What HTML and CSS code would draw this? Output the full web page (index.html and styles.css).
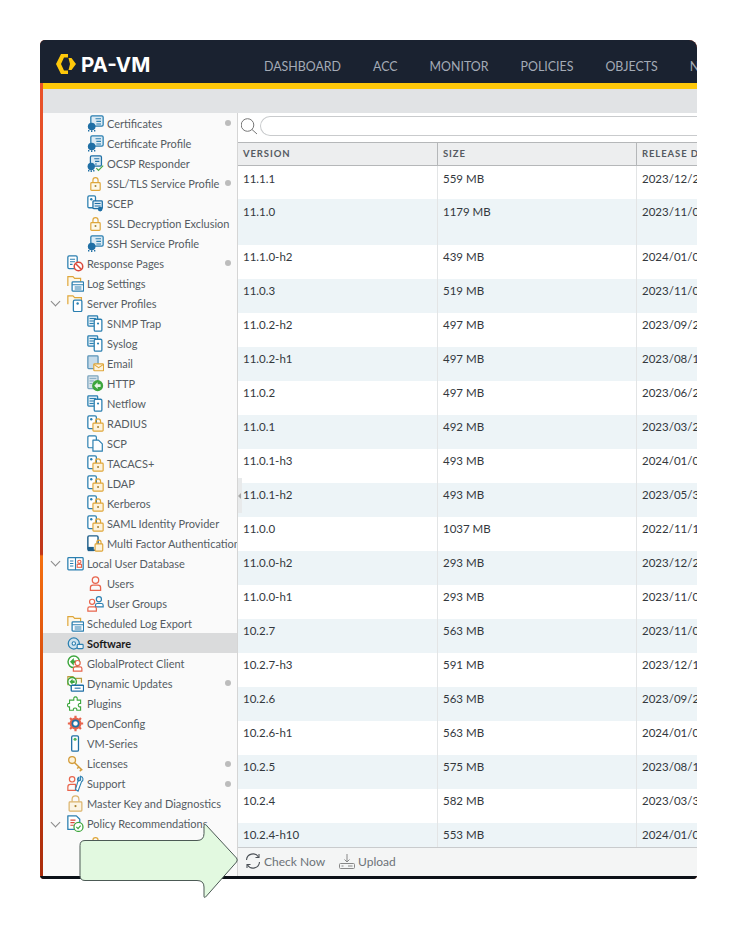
FILE: index.html
```html
<!DOCTYPE html>
<html lang="en">
<head>
    <meta charset="UTF-8">
    <title>PA-VM Software</title>
    <link rel="stylesheet" href="styles.css">
</head>
<body>
    <svg class="sprites" width="0" height="0">
        <symbol id="i-cert" viewBox="0 0 20 20">
            <rect x="4.500" y="1" width="14.500" height="12" rx="1.500" fill="#dcebf4" stroke="#2b7fb0" stroke-width="1.500"/>
            <path d="M10 4.500h6.500M11 7.500h5.500M11 10.500h5.500" stroke="#2b7fb0" stroke-width="1.200"/>
            <circle cx="5.500" cy="13.500" r="4.500" fill="#1f6fa5"/>
            <path d="M2 17.500v2M5.500 18v2M9 17.500v2" stroke="#1f6fa5" stroke-width="1.600"/>
        </symbol>
        <symbol id="i-ocsp" viewBox="0 0 20 20">
            <rect x="4" y="1" width="13" height="12" rx="1.500" fill="#dcebf4" stroke="#1f6fa5" stroke-width="1.500"/>
            <path d="M8.500 4.500h6M9.500 7.500h5M9.500 10.500h2" stroke="#1f6fa5" stroke-width="1.200"/>
            <circle cx="5" cy="13.500" r="4.300" fill="#1f6fa5"/>
            <path d="M2 17.500v2M5 18v2M8 17.500v2" stroke="#1f6fa5" stroke-width="1.600"/>
            <path d="M11 15.500l2.500 2.500L19 12.500" fill="none" stroke="#4aa84a" stroke-width="1.400"/>
        </symbol>
        <symbol id="i-lock" viewBox="0 0 20 20">
            <path d="M7 9V6a3 3 0 0 1 6 0v3" fill="none" stroke="#dfa63a" stroke-width="1.400"/>
            <rect x="4.500" y="9" width="11" height="9" rx="1" fill="#fdf8ea" stroke="#dfa63a" stroke-width="1.400"/>
            <circle cx="10" cy="13" r="1.200" fill="#a9822f"/>
        </symbol>
        <symbol id="i-scep" viewBox="0 0 20 20">
            <rect x="1" y="1" width="9" height="14" rx="1.500" fill="#fff" stroke="#2b7fb0" stroke-width="1.500"/>
            <circle cx="5" cy="5" r="1.400" fill="#2b7fb0"/>
            <rect x="7" y="7" width="11" height="9" rx="1" fill="#dcebf4" stroke="#1f6fa5" stroke-width="1.500"/>
            <path d="M9 10h7M9 13h7" stroke="#1f6fa5" stroke-width="1.200"/>
            <circle cx="15.500" cy="16.500" r="2.800" fill="#1f6fa5"/>
        </symbol>
        <symbol id="i-resp" viewBox="0 0 20 20">
            <rect x="1" y="1" width="11" height="15" rx="1.500" fill="#fff" stroke="#2b7fb0" stroke-width="1.500"/>
            <path d="M3.500 5h6M3.500 8h6M3.500 11h3" stroke="#2b7fb0" stroke-width="1.300"/>
            <circle cx="13.500" cy="13.500" r="5" fill="#fff" stroke="#d9493b" stroke-width="1.800"/>
            <path d="M10 10l7 7" stroke="#d9493b" stroke-width="1.800"/>
        </symbol>
        <symbol id="i-logs" viewBox="0 0 20 20">
            <path d="M1 13V2h6l2 2h7v5" fill="#fdf8ea" stroke="#dfa63a" stroke-width="1.400"/>
            <rect x="6" y="8" width="13.500" height="11" rx="1" fill="#fff" stroke="#2b7fb0" stroke-width="1.500"/>
            <path d="M6 11.500h13.500M9 14h8M9 16.500h8" stroke="#2b7fb0" stroke-width="1.200"/>
        </symbol>
        <symbol id="i-servers" viewBox="0 0 20 20">
            <path d="M1 11V1h6l2 2h8v4" fill="#fdf8ea" stroke="#dfa63a" stroke-width="1.400"/>
            <rect x="7.500" y="6" width="10" height="13.500" rx="1.500" fill="#fff" stroke="#2b7fb0" stroke-width="1.500"/>
            <circle cx="12.500" cy="10" r="1.400" fill="#2b7fb0"/>
        </symbol>
        <symbol id="i-snmp" viewBox="0 0 20 20">
            <rect x="1" y="1" width="11.500" height="12" rx="1" fill="#dcebf4" stroke="#2b7fb0" stroke-width="1.500"/>
            <path d="M3 4h7.500M3 7h5M3 10h5" stroke="#2b7fb0" stroke-width="1.200"/>
            <rect x="8.500" y="5" width="9" height="14" rx="1.500" fill="#fff" stroke="#2b7fb0" stroke-width="1.500"/>
            <circle cx="13" cy="10" r="1.300" fill="#2b7fb0"/>
        </symbol>
        <symbol id="i-email" viewBox="0 0 20 20">
            <rect x="1" y="1" width="12" height="15" rx="1" fill="#c5dbea" stroke="#5b94b8" stroke-width="1.500"/>
            <rect x="8" y="10.500" width="11.500" height="8" rx="1" fill="#fdf3dc" stroke="#dfa63a" stroke-width="1.400"/>
            <path d="M8 11l5.700 4 5.700-4" fill="none" stroke="#dfa63a" stroke-width="1.200"/>
        </symbol>
        <symbol id="i-http" viewBox="0 0 20 20">
            <rect x="1" y="1" width="12" height="15" rx="1" fill="#d5e2ea" stroke="#7ea6bf" stroke-width="1.500"/>
            <path d="M3 4h8M3 7h5M3 10h3" stroke="#7ea6bf" stroke-width="1.100"/>
            <circle cx="12.500" cy="12.500" r="6.500" fill="#3da63d"/>
            <path d="M8.500 12.500l4-4v2.500h3.500v3h-3.500v2.500z" fill="#e7f5e7"/>
        </symbol>
        <symbol id="i-auth" viewBox="0 0 20 20">
            <rect x="1" y="1" width="10" height="15" rx="1.500" fill="#fff" stroke="#2b7fb0" stroke-width="1.500"/>
            <circle cx="5" cy="5" r="1.400" fill="#2b7fb0"/>
            <path d="M10 9.500V7.500a3 3 0 0 1 6 0v2" fill="none" stroke="#dfa63a" stroke-width="1.400"/>
            <rect x="7" y="9.500" width="12" height="9.500" rx="1" fill="#fdf3dc" stroke="#dfa63a" stroke-width="1.400"/>
            <circle cx="13" cy="14" r="1.200" fill="#a9822f"/>
        </symbol>
        <symbol id="i-scp" viewBox="0 0 20 20">
            <rect x="1" y="1" width="10" height="14" rx="1.500" fill="#fff" stroke="#2b7fb0" stroke-width="1.400"/>
            <path d="M7 6h6.500l4.500 4.500V19H7z" fill="#fff" stroke="#2b7fb0" stroke-width="1.400" stroke-linejoin="round"/>
        </symbol>
        <symbol id="i-mfa" viewBox="0 0 20 20">
            <rect x="1" y="1" width="12" height="17" rx="1.500" fill="#fff" stroke="#1f5f8a" stroke-width="1.700"/>
            <rect x="1" y="14" width="7" height="5" fill="#1f5f8a"/>
            <path d="M11.500 10.500V8.500a2.500 2.500 0 0 1 5 0v2" fill="none" stroke="#dfa63a" stroke-width="1.400"/>
            <rect x="9.500" y="10.500" width="9" height="8.500" rx="1" fill="#fdf3dc" stroke="#dfa63a" stroke-width="1.400"/>
        </symbol>
        <symbol id="i-userdb" viewBox="0 0 20 20">
            <rect x="1" y="3" width="18" height="14.500" rx="1" fill="#fff" stroke="#2b7fb0" stroke-width="1.500"/>
            <path d="M10 3v14.500M3.500 7h4M3.500 10h4M3.500 13h4" stroke="#2b7fb0" stroke-width="1.300"/>
            <circle cx="14.500" cy="8" r="1.900" fill="none" stroke="#e8644c" stroke-width="1.300"/>
            <rect x="12" y="11" width="5" height="3.500" fill="none" stroke="#e8644c" stroke-width="1.300"/>
        </symbol>
        <symbol id="i-user" viewBox="0 0 20 20">
            <circle cx="10" cy="6" r="3.800" fill="none" stroke="#e8644c" stroke-width="1.500"/>
            <path d="M4 18v-3a3 3 0 0 1 3-3h6a3 3 0 0 1 3 3v3z" fill="none" stroke="#e8644c" stroke-width="1.500"/>
        </symbol>
        <symbol id="i-group" viewBox="0 0 20 20">
            <circle cx="14" cy="5" r="3" fill="none" stroke="#2b7fb0" stroke-width="1.400"/>
            <path d="M10 14v-2a2 2 0 0 1 2-2h5a2 2 0 0 1 2 2v2z" fill="#fff" stroke="#2b7fb0" stroke-width="1.400"/>
            <circle cx="6" cy="8" r="3" fill="#fff" stroke="#e8644c" stroke-width="1.400"/>
            <path d="M1 19v-3a2 2 0 0 1 2-2h6a2 2 0 0 1 2 2v3z" fill="#fff" stroke="#e8644c" stroke-width="1.400"/>
        </symbol>
        <symbol id="i-disc" viewBox="0 0 20 20">
            <circle cx="8" cy="10" r="6.500" fill="#cfe3ef" stroke="#2b7fb0" stroke-width="1.500"/>
            <circle cx="8" cy="10" r="2" fill="#fff" stroke="#2b7fb0" stroke-width="1.300"/>
            <rect x="12" y="11" width="7" height="5" rx="1" fill="#eef5f9" stroke="#2b7fb0" stroke-width="1.300"/>
        </symbol>
        <symbol id="i-gp" viewBox="0 0 20 20">
            <circle cx="8" cy="8" r="6.800" fill="#fff" stroke="#3da63d" stroke-width="1.700"/>
            <path d="M3.500 8l4.500-4.500v3h3v3H8v3z" fill="#3da63d"/>
            <circle cx="12.500" cy="9.500" r="3" fill="#fff" stroke="#e8644c" stroke-width="1.400"/>
            <path d="M7.500 19v-3a2 2 0 0 1 2-2h6a2 2 0 0 1 2 2v3z" fill="#fff" stroke="#e8644c" stroke-width="1.400"/>
        </symbol>
        <symbol id="i-dyn" viewBox="0 0 20 20">
            <path d="M1 12V2h6l2 2h8v5" fill="#fdf8ea" stroke="#b99a3e" stroke-width="1.400"/>
            <circle cx="6" cy="8" r="5" fill="#fff" stroke="#3da63d" stroke-width="1.600"/>
            <path d="M3 8l3.500-3.500v2h2.500v3H6.500v2z" fill="#3da63d"/>
            <rect x="5" y="12" width="14.500" height="7" rx="1" fill="#fff" stroke="#1f6fa5" stroke-width="1.600"/>
            <path d="M9 15.500h7" stroke="#1f6fa5" stroke-width="1.300"/>
        </symbol>
        <symbol id="i-plugin" viewBox="0 0 20 20">
            <path d="M8 3.500a2.200 2.200 0 0 1 4 0V6h4v4h-1.500a2.200 2.200 0 0 0 0 4H16v4h-4.500v-1.500a2.200 2.200 0 0 0-4 0V18H3v-4H1.800a2.200 2.200 0 0 1 0-4H3V6h5z" fill="#fff" stroke="#3da63d" stroke-width="1.300"/>
        </symbol>
        <symbol id="i-gear" viewBox="0 0 20 20">
            <circle cx="10" cy="10" r="7" fill="#e8644c"/>
            <path d="M10 1v3M10 16v3M1 10h3M16 10h3M3.600 3.600l2.200 2.200M14.200 14.200l2.200 2.200M16.400 3.600l-2.200 2.200M5.800 14.200l-2.200 2.200" stroke="#e8644c" stroke-width="2.600"/>
            <circle cx="10" cy="10" r="3.700" fill="#fff" stroke="#1f6fa5" stroke-width="2"/>
        </symbol>
        <symbol id="i-vm" viewBox="0 0 20 20">
            <rect x="5.500" y="1" width="8" height="18" rx="1.500" fill="#fff" stroke="#1f6fa5" stroke-width="1.500"/>
            <circle cx="9.500" cy="5" r="1.800" fill="#4db35a"/>
        </symbol>
        <symbol id="i-key" viewBox="0 0 20 20">
            <circle cx="6" cy="6" r="4" fill="#fdf3dc" stroke="#d39b38" stroke-width="1.500"/>
            <path d="M9 9l9 9M14 14l-2 2M17 17l-2 2" fill="none" stroke="#d39b38" stroke-width="1.700"/>
        </symbol>
        <symbol id="i-support" viewBox="0 0 20 20">
            <circle cx="6" cy="5" r="3.200" fill="none" stroke="#e8644c" stroke-width="1.400"/>
            <path d="M1 18v-4a3 3 0 0 1 3-3h6v7z" fill="none" stroke="#e8644c" stroke-width="1.400"/>
            <path d="M16 2v4l-2 1V2.500a3 3 0 0 0-1 4.500l-3 10 3 2 4-11a3.500 3.500 0 0 0-1-6.500z" fill="#fff" stroke="#2b7fb0" stroke-width="1.300"/>
        </symbol>
        <symbol id="i-master" viewBox="0 0 20 20">
            <path d="M6 8V5a4 4 0 0 1 8 0v3" fill="none" stroke="#dbb36a" stroke-width="1.400"/>
            <rect x="2.500" y="8" width="15" height="11" rx="1" fill="#fbf4e4" stroke="#dbb36a" stroke-width="1.400"/>
            <circle cx="10" cy="13" r="1.300" fill="#a9822f"/>
        </symbol>
        <symbol id="i-policy" viewBox="0 0 20 20">
            <path d="M1 1h10l4 4v12H1z" fill="#fff" stroke="#2b7fb0" stroke-width="1.500" stroke-linejoin="round"/>
            <path d="M4 6h6M4 9h5M4 12h4" stroke="#d9493b" stroke-width="1.300"/>
            <circle cx="13.500" cy="14" r="5.300" fill="#fff" stroke="#3da63d" stroke-width="1.500"/>
            <path d="M11 14l2 2 3-3.500" fill="none" stroke="#3da63d" stroke-width="1.400"/>
        </symbol>
    </svg>

    <div class="window">
        <header class="topbar">
            <div class="brand">
                <svg class="logo" viewBox="0 0 20 20" width="20" height="20">
                    <path d="M5 0h7v3.500H8L5 10l3 6.500h4V20H5L0 10z" fill="#fec80a"/>
                    <path d="M12.500 4h3l4.500 6-4.500 6h-3l1.500-6z" fill="#fec80a"/>
                </svg>
                <span>PA-VM</span>
            </div>
            <nav class="nav">
                <a>DASHBOARD</a>
                <a>ACC</a>
                <a>MONITOR</a>
                <a>POLICIES</a>
                <a>OBJECTS</a>
                <a>NETWORK</a>
            </nav>
        </header>
        <div class="subbar"></div>
        <div class="main">
            <aside class="tree">
                <div class="node lvl2"><svg class="ic"><use href="#i-cert"/></svg><span>Certificates</span><i class="dot"></i></div>
                <div class="node lvl2"><svg class="ic"><use href="#i-cert"/></svg><span>Certificate Profile</span></div>
                <div class="node lvl2"><svg class="ic"><use href="#i-ocsp"/></svg><span>OCSP Responder</span></div>
                <div class="node lvl2"><svg class="ic"><use href="#i-lock"/></svg><span>SSL/TLS Service Profile</span><i class="dot"></i></div>
                <div class="node lvl2"><svg class="ic"><use href="#i-scep"/></svg><span>SCEP</span></div>
                <div class="node lvl2"><svg class="ic"><use href="#i-lock"/></svg><span>SSL Decryption Exclusion</span></div>
                <div class="node lvl2"><svg class="ic"><use href="#i-cert"/></svg><span>SSH Service Profile</span></div>
                <div class="node"><svg class="ic"><use href="#i-resp"/></svg><span>Response Pages</span><i class="dot"></i></div>
                <div class="node"><svg class="ic"><use href="#i-logs"/></svg><span>Log Settings</span></div>
                <div class="node open"><svg class="ic"><use href="#i-servers"/></svg><span>Server Profiles</span></div>
                <div class="node lvl2"><svg class="ic"><use href="#i-snmp"/></svg><span>SNMP Trap</span></div>
                <div class="node lvl2"><svg class="ic"><use href="#i-snmp"/></svg><span>Syslog</span></div>
                <div class="node lvl2"><svg class="ic"><use href="#i-email"/></svg><span>Email</span></div>
                <div class="node lvl2"><svg class="ic"><use href="#i-http"/></svg><span>HTTP</span></div>
                <div class="node lvl2"><svg class="ic"><use href="#i-snmp"/></svg><span>Netflow</span></div>
                <div class="node lvl2"><svg class="ic"><use href="#i-auth"/></svg><span>RADIUS</span></div>
                <div class="node lvl2"><svg class="ic"><use href="#i-scp"/></svg><span>SCP</span></div>
                <div class="node lvl2"><svg class="ic"><use href="#i-auth"/></svg><span>TACACS+</span></div>
                <div class="node lvl2"><svg class="ic"><use href="#i-auth"/></svg><span>LDAP</span></div>
                <div class="node lvl2"><svg class="ic"><use href="#i-auth"/></svg><span>Kerberos</span></div>
                <div class="node lvl2"><svg class="ic"><use href="#i-auth"/></svg><span>SAML Identity Provider</span></div>
                <div class="node lvl2"><svg class="ic"><use href="#i-mfa"/></svg><span>Multi Factor Authentication</span></div>
                <div class="node open"><svg class="ic"><use href="#i-userdb"/></svg><span>Local User Database</span></div>
                <div class="node lvl2"><svg class="ic"><use href="#i-user"/></svg><span>Users</span></div>
                <div class="node lvl2"><svg class="ic"><use href="#i-group"/></svg><span>User Groups</span></div>
                <div class="node"><svg class="ic"><use href="#i-logs"/></svg><span>Scheduled Log Export</span></div>
                <div class="node active"><svg class="ic"><use href="#i-disc"/></svg><span>Software</span></div>
                <div class="node"><svg class="ic"><use href="#i-gp"/></svg><span>GlobalProtect Client</span></div>
                <div class="node"><svg class="ic"><use href="#i-dyn"/></svg><span>Dynamic Updates</span><i class="dot"></i></div>
                <div class="node"><svg class="ic"><use href="#i-plugin"/></svg><span>Plugins</span></div>
                <div class="node"><svg class="ic"><use href="#i-gear"/></svg><span>OpenConfig</span></div>
                <div class="node"><svg class="ic"><use href="#i-vm"/></svg><span>VM-Series</span></div>
                <div class="node"><svg class="ic"><use href="#i-key"/></svg><span>Licenses</span><i class="dot"></i></div>
                <div class="node"><svg class="ic"><use href="#i-support"/></svg><span>Support</span><i class="dot"></i></div>
                <div class="node"><svg class="ic"><use href="#i-master"/></svg><span>Master Key and Diagnostics</span></div>
                <div class="node open"><svg class="ic"><use href="#i-policy"/></svg><span>Policy Recommendations</span></div>
                <div class="node lvl2"><svg class="ic"><use href="#i-lock"/></svg><span></span></div>
            </aside>
            <section class="content">
                <div class="search">
                    <svg class="search-ic" viewBox="0 0 18 18" width="18" height="18">
                        <circle cx="6.500" cy="8" r="6.300" fill="none" stroke="#777" stroke-width="1"/>
                        <path d="M11 12.500l5 4.500" stroke="#777" stroke-width="1"/>
                    </svg>
                    <div class="search-box"></div>
                </div>
                <div class="thead">
                    <div class="cell c-ver">VERSION</div>
                    <div class="cell c-size">SIZE</div>
                    <div class="cell c-date">RELEASE DATE</div>
                </div>
                <div class="tbody">
                    <div class="row tall1"><div class="cell c-ver">11.1.1</div><div class="cell c-size">559 MB</div><div class="cell c-date">2023/12/20</div></div>
                    <div class="row tall2"><div class="cell c-ver">11.1.0</div><div class="cell c-size">1179 MB</div><div class="cell c-date">2023/11/08</div></div>
                    <div class="row"><div class="cell c-ver">11.1.0-h2</div><div class="cell c-size">439 MB</div><div class="cell c-date">2024/01/05</div></div>
                    <div class="row"><div class="cell c-ver">11.0.3</div><div class="cell c-size">519 MB</div><div class="cell c-date">2023/11/02</div></div>
                    <div class="row"><div class="cell c-ver">11.0.2-h2</div><div class="cell c-size">497 MB</div><div class="cell c-date">2023/09/21</div></div>
                    <div class="row"><div class="cell c-ver">11.0.2-h1</div><div class="cell c-size">497 MB</div><div class="cell c-date">2023/08/15</div></div>
                    <div class="row"><div class="cell c-ver">11.0.2</div><div class="cell c-size">497 MB</div><div class="cell c-date">2023/06/22</div></div>
                    <div class="row"><div class="cell c-ver">11.0.1</div><div class="cell c-size">492 MB</div><div class="cell c-date">2023/03/29</div></div>
                    <div class="row"><div class="cell c-ver">11.0.1-h3</div><div class="cell c-size">493 MB</div><div class="cell c-date">2024/01/04</div></div>
                    <div class="row"><div class="cell c-ver">11.0.1-h2</div><div class="cell c-size">493 MB</div><div class="cell c-date">2023/05/30</div></div>
                    <div class="row"><div class="cell c-ver">11.0.0</div><div class="cell c-size">1037 MB</div><div class="cell c-date">2022/11/17</div></div>
                    <div class="row"><div class="cell c-ver">11.0.0-h2</div><div class="cell c-size">293 MB</div><div class="cell c-date">2023/12/21</div></div>
                    <div class="row"><div class="cell c-ver">11.0.0-h1</div><div class="cell c-size">293 MB</div><div class="cell c-date">2023/11/02</div></div>
                    <div class="row"><div class="cell c-ver">10.2.7</div><div class="cell c-size">563 MB</div><div class="cell c-date">2023/11/09</div></div>
                    <div class="row"><div class="cell c-ver">10.2.7-h3</div><div class="cell c-size">591 MB</div><div class="cell c-date">2023/12/14</div></div>
                    <div class="row"><div class="cell c-ver">10.2.6</div><div class="cell c-size">563 MB</div><div class="cell c-date">2023/09/28</div></div>
                    <div class="row"><div class="cell c-ver">10.2.6-h1</div><div class="cell c-size">563 MB</div><div class="cell c-date">2024/01/04</div></div>
                    <div class="row"><div class="cell c-ver">10.2.5</div><div class="cell c-size">575 MB</div><div class="cell c-date">2023/08/10</div></div>
                    <div class="row"><div class="cell c-ver">10.2.4</div><div class="cell c-size">582 MB</div><div class="cell c-date">2023/03/30</div></div>
                    <div class="row"><div class="cell c-ver">10.2.4-h10</div><div class="cell c-size">553 MB</div><div class="cell c-date">2024/01/08</div></div>
                </div>
                <i class="splitter"></i>
                <div class="toolbar">
                    <span class="tool">
                        <svg viewBox="0 0 16 16" width="16" height="16"><path d="M1.500 7A6.500 6.500 0 0 1 13.500 4M14.500 9A6.500 6.500 0 0 1 2.500 12" fill="none" stroke="#4c5157" stroke-width="1.100"/><path d="M14 1v3.500h-3.500M2 15v-3.500h3.500" fill="none" stroke="#4c5157" stroke-width="1.100"/></svg>
                        Check Now
                    </span>
                    <span class="tool">
                        <svg viewBox="0 0 16 16" width="16" height="16"><path d="M8 1v8M5.500 6.500L8 9l2.500-2.500" fill="none" stroke="#888" stroke-width="1"/><rect x="0.500" y="10.500" width="15" height="5" rx="1" fill="none" stroke="#888"/><path d="M2.500 13h2M9 13h4.500" stroke="#888"/></svg>
                        Upload
                    </span>
                </div>
            </section>
        </div>
        <div class="bottom"></div>
    </div>

    <svg class="arrow" viewBox="0 0 160 76" width="160" height="76">
        <path d="M6 17.500 H118 Q125 17.500 125 10.500 V3 Q125 0 127.500 2.500 L157.500 35 Q159 37 157.500 39 L127.500 73 Q125 76 125 73 V64 Q125 57.500 118 57.500 H6 Q1 57.500 1 52.500 V22.500 Q1 17.500 6 17.500 Z" fill="#e2f9e0" stroke="#4c5a55" stroke-width="1"/>
    </svg>
</body>
</html>
```

FILE: styles.css
```css
* {
    box-sizing: border-box;
}
body {
    margin: 0;
    height: 940px;
    background: #fff;
    font-family: Lato, "Open Sans", sans-serif;
    overflow: hidden;
    position: relative;
}
.sprites {
    position: absolute;
}
.window {
    width: 657px;
    height: 839px;
    margin: 40px 0 0 40px;
    padding-left: 3px;
    border-radius: 5px 8px 4px 4px;
    overflow: hidden;
    display: flex;
    flex-direction: column;
    background: linear-gradient(#ee552b, #c0371a 61.300%, #f5700f 61.500%, #d0420f 80%, #a92c0c);
}
.topbar {
    height: 43px;
    margin-left: -3px;
    padding: 10px 0 0 3px;
    background: #1a2230;
    display: flex;
    align-items: center;
    flex: none;
}
.brand {
    width: 221px;
    flex: none;
    display: flex;
    align-items: center;
    gap: 5px;
    padding-left: 13px;
    color: #fff;
    font-family: Inter, "Open Sans", sans-serif;
    font-size: 20.500px;
    font-weight: 700;
    margin-top: -5px;
}
.nav {
    display: flex;
    gap: 32px;
    white-space: nowrap;
    font-size: 12.400px;
    color: #a4abb6;
}
.subbar {
    height: 30px;
    flex: none;
    border-top: 6px solid #fec80a;
    background: #e1e3e5;
}
.main {
    flex: 1;
    display: flex;
    min-height: 0;
}
.tree {
    width: 195px;
    flex: none;
    background: #fafafa;
    border-right: 1px solid #d5d5d5;
    overflow: hidden;
    font-size: 11px;
    color: #555c63;
}
.node {
    height: 20.030px;
    display: flex;
    align-items: center;
    position: relative;
    padding-left: 24px;
    white-space: nowrap;
}
.lvl2 {
    padding-left: 44px;
}
.ic {
    width: 17px;
    height: 17px;
    flex: none;
    margin-right: 3px;
}
.active {
    background: #dadbdc;
    color: #1a1a1a;
    font-weight: 700;
}
.dot {
    position: absolute;
    right: 6px;
    top: 7px;
    width: 6px;
    height: 6px;
    border-radius: 50%;
    background: #bcbcbc;
}
.open::before {
    content: "";
    position: absolute;
    left: 9px;
    top: 5px;
    width: 6px;
    height: 6px;
    border-right: 1px solid #888;
    border-bottom: 1px solid #888;
    transform: rotate(45deg);
}
.content {
    flex: 1;
    min-width: 0;
    display: flex;
    flex-direction: column;
    position: relative;
    background: #fff;
}
.search {
    height: 29px;
    flex: none;
    display: flex;
    align-items: flex-start;
    padding: 3px 0 0 3px;
    gap: 1px;
}
.search-ic {
    margin-top: 1px;
}
.search-box {
    flex: 1;
    height: 20px;
    border: 1px solid #c9cbcd;
    border-right: 0;
    border-radius: 10px 0 0 10px;
}
.thead {
    height: 24px;
    flex: none;
    display: flex;
    align-items: center;
    background: #edeeef;
    border-top: 1px solid #b5b7b9;
    border-bottom: 1px solid #b5b7b9;
    font-size: 9.500px;
    font-weight: 700;
    letter-spacing: 0.9px;
    color: #555b62;
    white-space: nowrap;
}
.thead .cell {
    height: 100%;
    display: flex;
    align-items: center;
    padding-top: 0;
    border-right-color: #b5b7b9;
}
.tbody {
    flex: 1;
    overflow: hidden;
    font-size: 11.500px;
    color: #33383d;
}
.row {
    height: 34px;
    display: flex;
    white-space: nowrap;
}
.row:nth-child(even) {
    background: #edf4f7;
}
.tall1 {
    height: 33px;
}
.tall2 {
    height: 46px;
}
.tall1 .cell,
.tall2 .cell {
    padding-top: 6px;
}
.cell {
    padding: 5px 0 0 5px;
    line-height: 14px;
    border-right: 1px solid #e3e5e6;
    flex: none;
}
.c-ver {
    width: 200px;
}
.c-size {
    width: 199px;
}
.c-date {
    width: 120px;
    border-right: 0;
}
.splitter {
    position: absolute;
    left: 0;
    top: 365px;
    width: 4px;
    height: 35px;
    background: #e8eaeb;
}
.splitter::after {
    content: "";
    position: absolute;
    left: 0;
    top: 15px;
    border: 3px solid transparent;
    border-left: 0;
    border-right-color: #a8a8a8;
}
.toolbar {
    height: 29px;
    flex: none;
    display: flex;
    align-items: center;
    gap: 14px;
    padding: 0 0 2px 7px;
    background: #f4f5f5;
    border-top: 1px solid #c9cbcd;
    font-size: 12px;
    color: #6c7278;
}
.tool {
    display: flex;
    align-items: center;
    gap: 3px;
}
.bottom {
    height: 3px;
    margin-left: -3px;
    flex: none;
    background: #0c1118;
}
.arrow {
    position: absolute;
    left: 79px;
    top: 823px;
    overflow: visible;
}
```
